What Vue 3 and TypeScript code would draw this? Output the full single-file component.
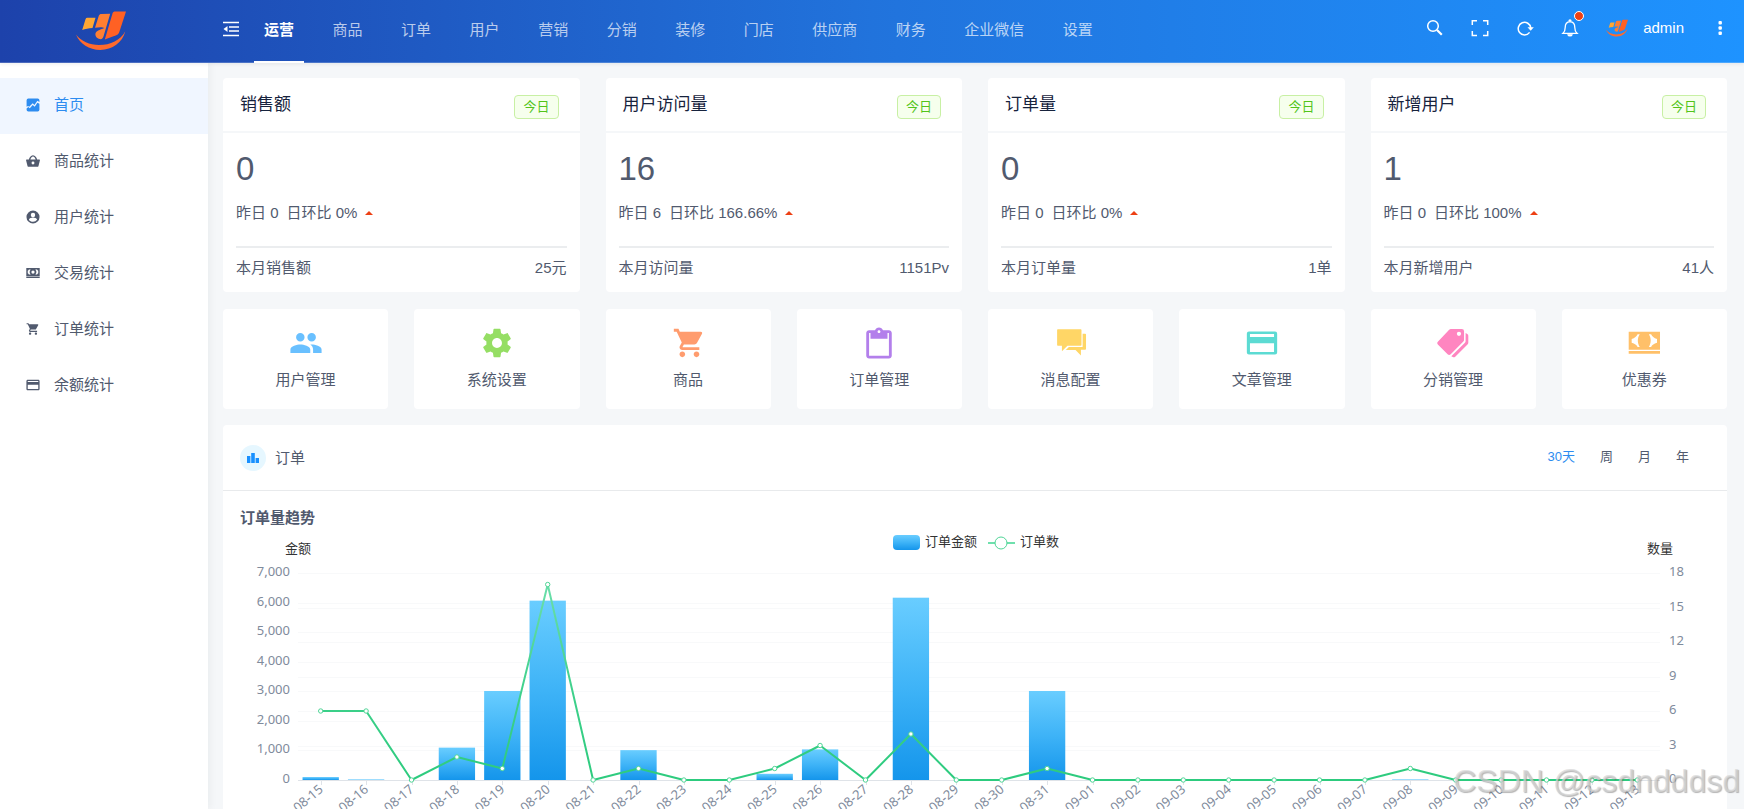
<script setup lang="ts">
import { computed, onBeforeUnmount, onMounted, ref } from 'vue'

interface MenuItem {
  label: string
  icon: string
}

interface Stat {
  title: string
  value: number
  yesterday: number
  ratio: string
  monthLabel: string
  monthValue: string
}

interface Shortcut {
  label: string
  color: string
  viewBox: string
  paths: string[]
}

const CART =
  'M7 18c-1.1 0-1.99.9-1.99 2S5.9 22 7 22s2-.9 2-2-.9-2-2-2zM1 2v2h2l3.6 7.59-1.35 2.45c-.16.28-.25.61-.25.96 0 1.1.9 2 2 2h12v-2H7.42c-.14 0-.25-.11-.25-.25l.03-.12.9-1.63h7.45c.75 0 1.41-.41 1.75-1.03l3.58-6.49A1 1 0 0 0 20 4H5.21l-.94-2H1zm16 16c-1.1 0-1.99.9-1.99 2s.89 2 1.99 2 2-.9 2-2-.9-2-2-2z'
const CARD =
  'M20 4H4c-1.11 0-1.99.89-1.99 2L2 18c0 1.11.89 2 2 2h16c1.11 0 2-.89 2-2V6c0-1.11-.89-2-2-2zm0 14H4v-6h16v6zm0-10H4V6h16v2z'
const CARD_WIDE =
  'M21 3H3C1.800 3 .7 4 .7 5.200v13.600C.7 20 1.800 21 3 21h18c1.200 0 2.300-1 2.300-2.200V5.200C23.300 4 22.200 3 21 3zm0 15.800H3V11.500h18zM21 7H3V5.200h18z'

const topMenu: string[] = ['运营', '商品', '订单', '用户', '营销', '分销', '装修', '门店', '供应商', '财务', '企业微信', '设置']
const activeTop = ref('运营')

const sideMenu: MenuItem[] = [
  { label: '首页', icon: 'M4 1h16a3 3 0 0 1 3 3v3l-3.500-2.500-5 7.500-3-3-6 6-2-1.500L1 15V4a3 3 0 0 1 3-3zM1 18l3-2.500 2.500 2L11.500 12l3.500 3 4.500-7L23 10v10a3 3 0 0 1-3 3H4a3 3 0 0 1-3-3z' },
  { label: '商品统计', icon: 'M5 9.500C5.500 6 8.500 2 12 2s6.500 4 7 7.500h4c.6 0 1 .5.900 1l-2.500 10a2 2 0 0 1-2 1.500H4.600a2 2 0 0 1-2-1.500L.1 10.500c-.1-.5.3-1 .9-1h4zm2.500 0h9C16 7 14 4.200 12 4.200S8 7 7.500 9.500zM12 13a2.500 2.500 0 1 0 0 5 2.500 2.500 0 0 0 0-5z' },
  { label: '用户统计', icon: 'M12 .8a11.200 11.200 0 1 0 0 22.400A11.200 11.200 0 0 0 12 .8zm0 4a3.800 3.800 0 1 1 0 7.600 3.800 3.800 0 0 1 0-7.600zm0 15.400c-3 0-5.500-1.500-7-3.700.1-2.300 4.700-3.500 7-3.500s6.900 1.200 7 3.500a8.400 8.400 0 0 1-7 3.700z' },
  { label: '交易统计', icon: 'M.5 3.500h23v13.500H.5zM5 6a4 4 0 0 1-2 2v4.500a4 4 0 0 1 2 2h3a6.500 6.500 0 0 1 0-8.500zm14 0h-3a6.500 6.500 0 0 1 0 8.500h3a4 4 0 0 1 2-2V8a4 4 0 0 1-2-2zM12 7.500a2.800 2.800 0 1 0 0 5.600 2.800 2.800 0 0 0 0-5.600zM.5 18h23v2.500H.5z' },
  { label: '订单统计', icon: CART },
  { label: '余额统计', icon: CARD_WIDE },
]
const activeSide = ref('首页')

const stats: Stat[] = [
  { title: '销售额', value: 0, yesterday: 0, ratio: '0%', monthLabel: '本月销售额', monthValue: '25元' },
  { title: '用户访问量', value: 16, yesterday: 6, ratio: '166.66%', monthLabel: '本月访问量', monthValue: '1151Pv' },
  { title: '订单量', value: 0, yesterday: 0, ratio: '0%', monthLabel: '本月订单量', monthValue: '1单' },
  { title: '新增用户', value: 1, yesterday: 0, ratio: '100%', monthLabel: '本月新增用户', monthValue: '41人' },
]

const shortcuts: Shortcut[] = [
  {
    label: '用户管理',
    color: '#69c0ff',
    viewBox: '0 0 24 24',
    paths: ['M16 11c1.660 0 2.990-1.340 2.990-3S17.660 5 16 5c-1.660 0-3 1.340-3 3s1.340 3 3 3zm-8 0c1.660 0 2.990-1.340 2.990-3S9.660 5 8 5C6.340 5 5 6.340 5 8s1.340 3 3 3zm0 2c-2.330 0-7 1.170-7 3.500V19h14v-2.500c0-2.330-4.670-3.500-7-3.500zm8 0c-.29 0-.62.02-.97.05 1.160.84 1.970 1.970 1.970 3.450V19h6v-2.500c0-2.330-4.670-3.500-7-3.500z'],
  },
  {
    label: '系统设置',
    color: '#95de64',
    viewBox: '0 0 24 24',
    paths: ['M19.43 12.98c.04-.32.07-.64.07-.98s-.03-.66-.07-.98l2.110-1.650c.19-.15.24-.42.12-.64l-2-3.460c-.12-.22-.39-.3-.61-.22l-2.490 1c-.52-.4-1.080-.73-1.690-.98l-.38-2.650C14.460 2.180 14.250 2 14 2h-4c-.25 0-.46.18-.49.42l-.38 2.650c-.61.25-1.170.59-1.690.98l-2.490-1c-.23-.09-.49 0-.61.22l-2 3.460c-.13.22-.07.49.12.64l2.110 1.650c-.04.32-.07.65-.07.98s.03.66.07.98l-2.110 1.650c-.19.15-.24.42-.12.64l2 3.460c.12.22.39.3.61.22l2.490-1c.52.4 1.080.73 1.690.98l.38 2.650c.03.24.24.42.49.42h4c.25 0 .46-.18.49-.42l.38-2.650c.61-.25 1.170-.59 1.690-.98l2.490 1c.23.09.49 0 .61-.22l2-3.460c.12-.22.07-.49-.12-.64l-2.110-1.650zM12 15.500c-1.930 0-3.500-1.570-3.500-3.500s1.570-3.500 3.500-3.500 3.500 1.570 3.500 3.500-1.570 3.500-3.500 3.500z'],
  },
  { label: '商品', color: '#ff9c6e', viewBox: '-1 0 24 24', paths: [CART] },
  {
    label: '订单管理',
    color: '#b37feb',
    viewBox: '0 -1 24 24',
    paths: ['M19 2h-4.180C14.400.84 13.300 0 12 0c-1.300 0-2.400.84-2.820 2H5c-1.100 0-2 .9-2 2v16c0 1.100.9 2 2 2h14c1.100 0 2-.9 2-2V4c0-1.100-.9-2-2-2zm-7 0c.55 0 1 .45 1 1s-.45 1-1 1-1-.45-1-1 .45-1 1-1zm7 18H5V4h1v4h12V4h1v16z'],
  },
  {
    label: '消息配置',
    color: '#ffd666',
    viewBox: '0 0 24 24',
    paths: [
      'M2.700 2.300h16.200a.5.5 0 0 1 .5.5v10.600a.5.5 0 0 1-.5.5H9.500l-3.900 4v-4H2.700a.5.5 0 0 1-.5-.5V2.800a.5.5 0 0 1 .5-.5z',
      'M20.200 5.400H22a.6.6 0 0 1 .6.6v10.100a.6.6 0 0 1-.6.6h-3v4.200l-3.800-4H8.300l2.200-2h9.700z',
    ],
  },
  {
    label: '文章管理',
    color: '#5cdbd3',
    viewBox: '0 0 24 24',
    paths: ['M21.200 3.800H2.800a1.500 1.500 0 0 0-1.500 1.500v13.400a1.500 1.500 0 0 0 1.500 1.500h18.400a1.500 1.500 0 0 0 1.500-1.500V5.300a1.500 1.500 0 0 0-1.500-1.500zm-.7 14.600h-17v-6.200h17zm0-10.700h-17V5.700h17z'],
  },
  {
    label: '分销管理',
    color: '#ff85c0',
    viewBox: '0 0 24 24',
    paths: [
      'M10.500 2.100h7.700a1.600 1.600 0 0 1 1.600 1.600v6a1.600 1.600 0 0 1-.5 1.200l-8.900 9a1.600 1.600 0 0 1-2.200 0L1.300 13a1.300 1.300 0 0 1 0-1.900l8-8.500a1.800 1.800 0 0 1 1.200-.5zM16.200 4a1.500 1.500 0 1 0 0 3 1.500 1.500 0 0 0 0-3z',
      'M20.900 5l1.200.6a1.300 1.300 0 0 1 .7 1.200v5a1.500 1.500 0 0 1-.4 1l-9 9a1.500 1.500 0 0 1-1.500.1l-1.100-.5 9.600-9.500a1.500 1.500 0 0 0 .5-1.100z',
    ],
  },
  {
    label: '优惠券',
    color: '#ffc069',
    viewBox: '0 0 24 24',
    paths: [
      'M1.200 4h22.100v12.800H1.200zM9 5.900H7.500C6.800 7.500 5.500 8.600 3.300 9.200v2.600c2.200.6 3.500 1.500 4.200 3H9c-1.800-2.600-1.800-6.300 0-8.900zm6.400 0c1.800 2.600 1.800 6.300 0 8.900H17c.7-1.500 2-2.400 4.200-3V9.200C19 8.600 17.700 7.500 17 5.900z',
      'M1.200 17.700h22.100v1.900H1.200z',
    ],
  },
]

const ranges: string[] = ['30天', '周', '月', '年']
const activeRange = ref('30天')

/* ---- order trend chart ---- */
const amounts: number[] = [100, 20, 0, 1095, 3010, 6065, 0, 1010, 0, 0, 210, 1035, 0, 6165, 0, 0, 3010, 0, 0, 0, 0, 0, 0, 0, 20, 0, 0, 0, 0, 0]
const counts: number[] = [6, 6, 0, 2, 1, 17, 0, 1, 0, 0, 1, 3, 0, 4, 0, 0, 1, 0, 0, 0, 0, 0, 0, 0, 1, 0, 0, 0, 0, 0]
const dates: string[] = amounts.map((_, i) => {
  const day = new Date(2024, 7, 15 + i)
  return `${String(day.getMonth() + 1).padStart(2, '0')}-${String(day.getDate()).padStart(2, '0')}`
})

const plot = { left: 75, right: 67, top: 44, bottom: 251 }
const chartBox = ref<HTMLDivElement | null>(null)
const chartWidth = ref(1504)
let observer: ResizeObserver | undefined

function measure(): void {
  if (chartBox.value) chartWidth.value = chartBox.value.clientWidth
}

onMounted(() => {
  measure()
  observer = new ResizeObserver(measure)
  if (chartBox.value) observer.observe(chartBox.value)
})
onBeforeUnmount(() => observer?.disconnect())

const plotHeight = plot.bottom - plot.top
const plotEnd = computed(() => chartWidth.value - plot.right)
const step = computed(() => (plotEnd.value - plot.left) / dates.length)
const center = computed(() => Math.round(chartWidth.value / 2))
const amountY = (v: number): number => plot.bottom - (v / 7000) * plotHeight
const countY = (v: number): number => plot.bottom - (v / 18) * plotHeight
const pointX = (i: number): number => plot.left + step.value * (i + 0.5)

const amountTicks: number[] = [0, 1000, 2000, 3000, 4000, 5000, 6000, 7000]
const countTicks: number[] = [0, 3, 6, 9, 12, 15, 18]
const linePoints = computed(() => counts.map((v, i) => `${pointX(i)},${countY(v)}`).join(' '))
</script>

<template>
  <div class="layout">
    <svg class="defs" width="0" height="0" aria-hidden="true">
      <symbol id="brand" viewBox="0 0 50 39">
        <path fill="#ffa733" d="M11.500 6.800h8l-3 10.300c-3.700.2-7.300.8-10.300 2L9.500 8.200a2 2 0 0 1 2-1.400z" />
        <path fill="#ff7f32" d="M22.800 4.800c.5-1.200 1.300-1.800 2.700-1.800l8.700-.2-6.500 22c-.6 2.200-1.600 3.400-3 3.400-2.600 0-5.600-2.100-5.300-5.200.3-2.900 4.200-4.300 9-6-1.600-1.200-5.600-1-9.400-.3z" />
        <path fill="#ff6124" d="M36.500 2.500c.5-1.300 1.300-1.900 2.800-1.900H50l-6.600 20.200c-.6 1.800-1.600 2.800-3.200 3.500L28.800 28.600z" />
        <path fill="#ff6a2c" d="M0 23.600c5.200 6.900 13.600 10.500 23 10.500 11.500 0 21.500-4.800 26.300-13.800C46.500 31.500 36.300 39 24.300 39 13 39 4 33.200 0 23.600z" />
      </symbol>
    </svg>

    <header class="topbar">
      <a class="brand" href="#" aria-label="首页"><svg width="50" height="39"><use href="#brand" /></svg></a>
      <button class="icon-btn fold" type="button" aria-label="收起菜单">
        <svg width="16" height="16" viewBox="0 0 16 16" fill="none" stroke="#fff" stroke-width="1.500">
          <path d="M0 1.500h16M6 6h10M6 10h10M0 14.500h16" />
          <path d="M4.500 5v6L.5 8z" fill="#fff" stroke="none" />
        </svg>
      </button>
      <nav class="topnav">
        <a v-for="item in topMenu" :key="item" href="#" :class="{ active: item === activeTop }" @click.prevent="activeTop = item">{{ item }}</a>
      </nav>
      <div class="actions">
        <button class="icon-btn" type="button" aria-label="搜索">
          <svg width="18" height="18" viewBox="0 0 18 18" fill="none" stroke="#fff">
            <circle cx="7" cy="7" r="5.300" stroke-width="1.500" />
            <path d="M11 11l4.800 4.800" stroke-width="2.200" />
          </svg>
        </button>
        <button class="icon-btn" type="button" aria-label="全屏">
          <svg width="18" height="18" viewBox="0 0 18 18" fill="none" stroke="#fff" stroke-width="1.500">
            <path d="M1.300 6V1.800H6M12 1.800h4.700V6M16.700 12v4.500H12M6 16.500H1.300V12" />
          </svg>
        </button>
        <button class="icon-btn" type="button" aria-label="刷新">
          <svg width="18" height="18" viewBox="0 0 18 18" fill="none" stroke="#fff" stroke-width="1.500">
            <path d="M13.600 13.400A6.300 6.300 0 1 1 14.800 9" />
            <path d="M11.500 8.200h6.300l-3.100 3.600z" fill="#fff" stroke="none" />
          </svg>
        </button>
        <button class="icon-btn bell" type="button" aria-label="通知">
          <svg width="18" height="18" viewBox="0 0 18 18" fill="none" stroke="#fff" stroke-width="1.300">
            <path d="M2 14.300c1.700-1.500 2.200-2.500 2.200-5.800 0-3.400 1.600-5.600 4.800-5.800 3.200.2 4.800 2.400 4.800 5.800 0 3.300.5 4.300 2.200 5.800z" />
            <path d="M8 2a1 1 0 0 1 2 0M7 15.800c.4 1.500 3.600 1.500 4 0z" fill="#fff" />
          </svg>
          <i class="dot"></i>
        </button>
        <button class="account" type="button">
          <svg width="22" height="18"><use href="#brand" /></svg>
          <span>admin</span>
        </button>
        <button class="icon-btn" type="button" aria-label="更多">
          <svg width="18" height="18" viewBox="0 0 18 18" fill="#fff">
            <rect x="7.500" y="2" width="3.400" height="3.400" rx="1" />
            <rect x="7.500" y="7.300" width="3.400" height="3.400" rx="1" />
            <rect x="7.500" y="12.600" width="3.400" height="3.400" rx="1" />
          </svg>
        </button>
      </div>
    </header>

    <div class="body">
      <aside class="sidebar">
        <nav>
          <a v-for="item in sideMenu" :key="item.label" href="#" :class="{ active: item.label === activeSide }" @click.prevent="activeSide = item.label">
            <svg width="14" height="14" viewBox="0 0 24 24" fill="currentColor" fill-rule="evenodd"><path :d="item.icon" /></svg>
            <span>{{ item.label }}</span>
          </a>
        </nav>
      </aside>

      <main class="content">
        <section class="stats">
          <article v-for="stat in stats" :key="stat.title" class="card stat">
            <header>
              <h2>{{ stat.title }}</h2>
              <span class="tag">今日</span>
            </header>
            <div class="stat-body">
              <strong>{{ stat.value }}</strong>
              <p>
                <span>昨日 {{ stat.yesterday }}</span>
                <span>日环比 {{ stat.ratio }}</span>
                <svg width="8" height="4" viewBox="0 0 8 4"><path d="M4 0l4 4H0z" fill="#ed4014" /></svg>
              </p>
              <footer>
                <span>{{ stat.monthLabel }}</span>
                <span>{{ stat.monthValue }}</span>
              </footer>
            </div>
          </article>
        </section>

        <nav class="shortcuts">
          <a v-for="item in shortcuts" :key="item.label" href="#" class="card shortcut">
            <svg width="34" height="34" :viewBox="item.viewBox" :fill="item.color" fill-rule="evenodd">
              <path v-for="(d, i) in item.paths" :key="i" :d="d" />
            </svg>
            <span>{{ item.label }}</span>
          </a>
        </nav>

        <section class="card orders">
          <header>
            <span class="badge">
              <svg width="14" height="14" viewBox="0 0 14 14" fill="#1890ff"><path d="M1 5h3.400v7H1zM5.200 2h3.600v10H5.200zM9.600 7H13v5H9.600z" /></svg>
            </span>
            <h2>订单</h2>
            <div class="ranges">
              <button v-for="item in ranges" :key="item" type="button" :class="{ active: item === activeRange }" @click="activeRange = item">{{ item }}</button>
            </div>
          </header>
          <h3>订单量趋势</h3>
          <div ref="chartBox" class="chart">
            <svg :width="chartWidth" height="310" role="img" aria-label="订单量趋势">
              <defs>
                <linearGradient id="bar" x1="0" y1="0" x2="0" y2="1">
                  <stop offset="0" stop-color="#69cdff" />
                  <stop offset="0.5" stop-color="#3eb3f7" />
                  <stop offset="1" stop-color="#1495eb" />
                </linearGradient>
                <linearGradient id="line" gradientUnits="userSpaceOnUse" x1="0" :y1="plot.top" x2="0" :y2="plot.bottom">
                  <stop offset="0" stop-color="#6fe0ad" />
                  <stop offset="0.6" stop-color="#3dd08a" />
                  <stop offset="1" stop-color="#2dcb7e" />
                </linearGradient>
              </defs>

              <rect :x="center - 82" y="6" width="27" height="15" rx="4" fill="url(#bar)" />
              <text class="legend" :x="center - 50" y="17">订单金额</text>
              <path :d="`M${center + 13} 14h27`" stroke="#6fe0ad" stroke-width="2" />
              <circle :cx="center + 26" cy="14" r="6" fill="#fff" stroke="#4fd596" />
              <text class="legend" :x="center + 45" y="17">订单数</text>

              <text class="legend" :x="plot.left" y="24" text-anchor="middle">金额</text>
              <text class="legend" :x="plotEnd" y="24" text-anchor="middle">数量</text>

              <g class="grid">
                <line v-for="t in amountTicks" :key="`a${t}`" :x1="plot.left" :x2="plotEnd" :y1="Math.round(amountY(t))" :y2="Math.round(amountY(t))" />
                <line v-for="t in countTicks" :key="`c${t}`" :x1="plot.left" :x2="plotEnd" :y1="Math.round(countY(t))" :y2="Math.round(countY(t))" />
              </g>
              <g class="axis">
                <line :x1="plot.left" :x2="plotEnd" :y1="plot.bottom" :y2="plot.bottom" />
                <line v-for="(d, i) in dates" :key="d" :x1="Math.round(pointX(i))" :x2="Math.round(pointX(i))" :y1="plot.bottom" :y2="plot.bottom + 5" />
              </g>

              <g class="tick">
                <text v-for="t in amountTicks" :key="`a${t}`" :x="plot.left - 8" :y="amountY(t) + 3" text-anchor="end">{{ t.toLocaleString('en-US') }}</text>
                <text v-for="t in countTicks" :key="`c${t}`" :x="plotEnd + 9" :y="countY(t) + 3">{{ t }}</text>
                <text v-for="(d, i) in dates" :key="d" text-anchor="end" :transform="`translate(${pointX(i)} ${plot.bottom + 7}) rotate(-40)`" y="5">{{ d }}</text>
              </g>

              <rect v-for="(v, i) in amounts" :key="`b${i}`" :x="pointX(i) - step * 0.4" :y="amountY(v)" :width="step * 0.8" :height="plot.bottom - amountY(v)" fill="url(#bar)" />
              <polyline :points="linePoints" fill="none" stroke="url(#line)" stroke-width="2" stroke-linejoin="bevel" />
              <circle v-for="(v, i) in counts" :key="`p${i}`" :cx="pointX(i)" :cy="countY(v)" r="2.2" fill="#fff" stroke="#4fd596" />
            </svg>
          </div>
        </section>
      </main>
    </div>

    <span class="watermark">CSDN @csdndddsd</span>
  </div>
</template>

<style>
body {
  margin: 0;
  overflow: hidden;
}
</style>

<style scoped>
.layout {
  position: relative;
  display: flex;
  flex-direction: column;
  height: 100vh;
  overflow: hidden;
  background: #f5f7f9;
  color: #515a6e;
  font-family: 'Liberation Sans', 'Noto Sans CJK SC', sans-serif;
  font-size: 15px;
  line-height: 22px;
}

.defs {
  position: absolute;
}

a {
  color: inherit;
  text-decoration: none;
}

button {
  padding: 0;
  border: 0;
  background: none;
  color: inherit;
  font: inherit;
  cursor: pointer;
}

h2,
h3,
p {
  margin: 0;
}

svg {
  display: block;
  flex: none;
}

.topbar {
  position: relative;
  z-index: 2;
  display: flex;
  flex: none;
  box-sizing: border-box;
  height: 63px;
  border-bottom: 1px solid rgba(255, 255, 255, 0.2);
  background: linear-gradient(90deg, #1d42ab, #2173dc, #1e93ff) border-box;
  box-shadow: 0 1px 4px rgba(0, 21, 41, 0.08);
  color: #fff;
}

.brand {
  display: flex;
  flex: none;
  align-items: center;
  justify-content: center;
  width: 201px;
  padding-bottom: 2px;
}

.icon-btn {
  display: flex;
  align-items: center;
}

.fold {
  margin: 0 15px 4px 22px;
}

.topnav {
  display: flex;
  flex: 0 1 849px;
  justify-content: space-between;
}

.topnav a {
  position: relative;
  padding: 19px 10px;
  color: rgba(255, 255, 255, 0.7);
  white-space: nowrap;
}

.topnav .active {
  color: #fff;
  font-weight: 700;
}

.topnav .active::after {
  position: absolute;
  right: 0;
  bottom: -1px;
  left: 0;
  height: 2px;
  background: #fff;
  content: '';
}

.actions {
  display: flex;
  align-items: center;
  gap: 27px;
  margin-left: auto;
  padding: 0 15px 6px 0;
}

.bell {
  position: relative;
}

.dot {
  position: absolute;
  top: -8px;
  right: -5px;
  width: 8px;
  height: 8px;
  border: 1px solid #fff;
  border-radius: 50%;
  background: #ed4014;
}

.account {
  display: flex;
  align-items: center;
  gap: 15px;
}

.body {
  display: flex;
  flex: 1;
  min-height: 0;
}

.sidebar {
  flex: none;
  width: 208px;
  padding-top: 15px;
  background: #fff;
  box-shadow: 2px 0 8px rgba(29, 35, 41, 0.05);
}

.sidebar a {
  display: flex;
  align-items: center;
  gap: 14px;
  box-sizing: border-box;
  height: 56px;
  padding: 0 26px 2px;
}

.sidebar .active {
  background: #f0f6ff;
  color: #2d8cf0;
}

.content {
  flex: 1;
  min-width: 0;
  padding: 15px 17px 0 15px;
}

.card {
  border-radius: 4px;
  background: #fff;
}

.stats {
  display: grid;
  grid-template-columns: repeat(4, 1fr);
  gap: 26px;
}

.stat header {
  display: flex;
  align-items: flex-start;
  justify-content: space-between;
  padding: 17px 21px 12px 17px;
  border-bottom: 2px solid #f5f7f9;
}

.stat h2 {
  padding-bottom: 2px;
  color: #17233d;
  font-size: 17px;
  font-weight: 400;
  line-height: 20px;
}

.tag {
  padding: 0 8px;
  border: 1px solid #c8f0a4;
  border-radius: 4px;
  background: #f6ffed;
  color: #52c41a;
  font-size: 13px;
}

.stat-body {
  padding: 14px 13px 0;
}

.stat strong {
  display: block;
  font-size: 33px;
  font-weight: 400;
  line-height: 44px;
}

.stat p {
  display: flex;
  align-items: center;
  gap: 8px;
  padding: 11px 0 22px;
}

.stat footer {
  display: flex;
  justify-content: space-between;
  padding: 9px 0 13px;
  border-top: 2px solid #ebedef;
}

.shortcuts {
  display: grid;
  grid-template-columns: repeat(8, 1fr);
  gap: 26px;
  margin: 17px 0 16px;
}

.shortcut {
  display: flex;
  flex-direction: column;
  align-items: center;
  gap: 9px;
  padding: 17px 0 18px;
}

.orders header {
  display: flex;
  align-items: center;
  padding: 20px 38px 19px 17px;
  border-bottom: 1px solid #e8eaec;
}

.badge {
  display: flex;
  align-items: center;
  justify-content: center;
  width: 26px;
  height: 26px;
  border-radius: 50%;
  background: #e6f7ff;
}

.orders h2 {
  padding-left: 9px;
  font-size: 15px;
  font-weight: 400;
}

.ranges {
  display: flex;
  gap: 25px;
  margin-left: auto;
  padding-bottom: 3px;
  font-size: 13px;
}

.ranges .active {
  color: #2d8cf0;
}

.orders h3 {
  padding: 16px 17px 0;
  font-size: 15px;
  font-weight: 700;
}

.chart {
  width: 100%;
}

.legend {
  fill: #333;
  font-size: 13px;
}

.grid line {
  stroke: #f8f9fa;
}

.axis line {
  stroke: #dfe3e8;
}

.tick {
  fill: #7f8b9c;
  font-family: 'Noto Sans', sans-serif;
  font-size: 13px;
}

.grid,
.axis {
  shape-rendering: crispEdges;
}

.watermark {
  position: absolute;
  right: 4px;
  bottom: 8px;
  z-index: 3;
  color: rgba(215, 215, 215, 0.7);
  font-size: 32px;
  line-height: 40px;
  text-shadow: 1px 1px 1px rgba(90, 90, 90, 0.45);
  pointer-events: none;
}
</style>
